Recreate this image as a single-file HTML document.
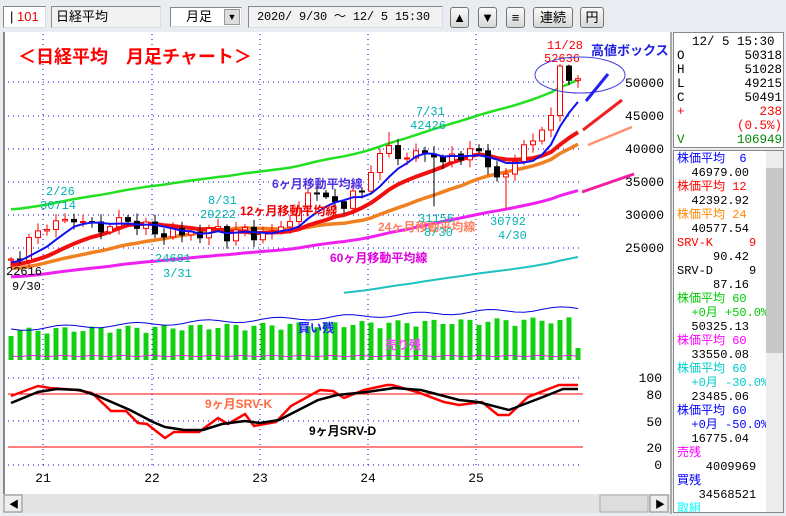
<!DOCTYPE html>
<html><head><meta charset="utf-8">
<style>
*{margin:0;padding:0;box-sizing:border-box}
body{width:786px;height:516px;overflow:hidden;background:#e9edf2;font-family:"Liberation Sans","Noto Sans CJK JP",sans-serif;position:relative}
.box{position:absolute;background:#fff;border:1px solid #888;border-right-color:#ddd;border-bottom-color:#ddd;font-size:13px;line-height:20px}
.btn{position:absolute;top:7px;height:21px;border:1px solid #777;border-radius:3px;background:linear-gradient(#fafafa,#d8d8d8);font-size:13px;text-align:center;line-height:19px}
#info div,#list div{height:14px;line-height:14px;font-family:"Liberation Mono","Noto Sans CJK JP",monospace;font-size:12.5px;white-space:pre}
#list div{font-size:12px}
</style></head><body>
<div class="box" style="left:3px;top:6px;width:43px;height:22px;color:#e00;padding-left:6px"><span style="color:#000">|</span> 101</div>
<div class="box" style="left:51px;top:6px;width:110px;height:22px;padding-left:4px;background:#f2f2f2">日経平均</div>
<div class="box" style="left:170px;top:7px;width:72px;height:20px;padding-left:15px;line-height:18px">月足<span style="position:absolute;right:1px;top:1px;width:16px;height:16px;background:#ddd;border:1px solid #999;font-size:9px;text-align:center;line-height:15px">▼</span></div>
<div class="box" style="left:248px;top:6px;width:195px;height:22px;padding-left:8px;background:#f2f2f2;font-family:'Liberation Mono','Noto Sans CJK JP',monospace;font-size:12px;letter-spacing:-0.2px;white-space:nowrap;overflow:hidden">2020/ 9/30 ～ 12/ 5 15:30</div>
<div class="btn" style="left:450px;width:19px">▲</div>
<div class="btn" style="left:478px;width:19px">▼</div>
<div class="btn" style="left:506px;width:19px">≡</div>
<div class="btn" style="left:533px;width:40px">連続</div>
<div class="btn" style="left:580px;width:24px">円</div>

<svg style="position:absolute;left:0;top:31px" width="786" height="485" viewBox="0 31 786 485">
<rect x="0" y="31" width="786" height="485" fill="#e9edf2"/>
<rect x="3" y="32" width="667" height="462" fill="#fff"/>
<rect x="3" y="32" width="2" height="462" fill="#888"/>
<rect x="3" y="494" width="667" height="19" fill="#e4e4e4"/>
<rect x="4" y="495" width="18" height="17" fill="#eee" stroke="#888"/>
<text x="9" y="508" font-size="10">◀</text>
<rect x="600" y="495" width="48" height="17" fill="#ddd" stroke="#aaa"/>
<rect x="650" y="495" width="18" height="17" fill="#eee" stroke="#888"/>
<text x="655" y="508" font-size="10">▶</text>
<g id="grid" stroke="#0000e0" stroke-width="1" stroke-dasharray="1,4"></g>
<g id="main"></g>
<line x1="8" y1="394" x2="583" y2="394" stroke="#f00"/>
<line x1="8" y1="447" x2="583" y2="447" stroke="#f00"/>
<polyline fill="none" stroke="#f00" stroke-width="2.5" points="11,396 38,386 50,388 77,390 92,393 111,411 126,411 138,423 147,424 165,438 174,432 199,432 218,418 228,424 245,414 254,426 276,422 291,406 320,390 333,391 344,398 364,390 387,385 392,385 417,392 444,402 459,405 482,402 498,415 509,415 528,397 559,385 578,385"/>
<polyline fill="none" stroke="#000" stroke-width="2.5" points="11,403 38,392 57,389 80,390 100,397 130,410 153,422 165,427 184,430 203,430 222,424 245,421 260,423 279,420 318,400 337,395 367,392 394,388 421,390 459,400 478,402 509,410 543,397 563,389 578,389"/>
<g font-weight="bold" font-size="12">
<text x="205" y="408" fill="#ff6a40">9ヶ月SRV-K</text>
<text x="309" y="435" fill="#000">9ヶ月SRV-D</text>
<text x="298" y="332" fill="#2020ff">買い残</text>
<text x="385" y="349" fill="#ff40ff">売り残</text>
<text x="272" y="188" fill="#5030e0">6ヶ月移動平均線</text>
<text x="240" y="215" fill="#f00000">12ヶ月移動平均線</text>
<text x="378" y="231" fill="#ff8060">24ヶ月移動平均線</text>
<text x="330" y="262" fill="#e000e0">60ヶ月移動平均線</text>
<text x="591" y="55" fill="#2020e0" font-size="13">高値ボックス</text>
</g>
<text x="18" y="63" fill="#f00" font-size="18" font-weight="bold">＜日経平均　月足チャート＞</text>
<g font-size="12" fill="#00b0b0" font-family="Liberation Mono,monospace">
<text x="46" y="195">2/26</text><text x="40" y="209">30714</text>
<text x="208" y="204">8/31</text><text x="200" y="218">29222</text>
<text x="155" y="262">24681</text><text x="163" y="277">3/31</text>
<text x="416" y="115">7/31</text><text x="410" y="129">42426</text>
<text x="418" y="222">31156</text><text x="424" y="236">8/30</text>
<text x="490" y="225">30792</text><text x="498" y="239">4/30</text>
</g>
<g font-size="12" fill="#000" font-family="Liberation Mono,monospace">
<text x="6" y="275">22616</text><text x="12" y="290">9/30</text>
</g>
<g font-size="12" fill="#f00" font-family="Liberation Mono,monospace">
<text x="547" y="49">11/28</text><text x="544" y="62">52636</text>
</g>
<ellipse cx="580" cy="75" rx="45" ry="18" fill="none" stroke="#4040e0" stroke-width="1"/>
<line x1="586" y1="101" x2="608" y2="74" stroke="#2020f0" stroke-width="3"/>
<line x1="583" y1="130" x2="622" y2="100" stroke="#f02020" stroke-width="3"/>
<line x1="588" y1="145" x2="632" y2="127" stroke="#ff9070" stroke-width="2.5"/>
<line x1="582" y1="192" x2="634" y2="174" stroke="#f020a0" stroke-width="3"/>
<g font-size="13" fill="#000" font-family="Liberation Mono,monospace" text-anchor="end">
<text x="664" y="87">50000</text><text x="664" y="120">45000</text><text x="664" y="153">40000</text>
<text x="664" y="186">35000</text><text x="664" y="219">30000</text><text x="664" y="252">25000</text>
<text x="662" y="382">100</text><text x="662" y="399">80</text><text x="662" y="426">50</text>
<text x="662" y="452">20</text><text x="662" y="469">0</text>
</g>
<g font-size="13" fill="#000" font-family="Liberation Mono,monospace" text-anchor="middle">
<text x="43" y="482">21</text><text x="152" y="482">22</text><text x="260" y="482">23</text><text x="368" y="482">24</text><text x="476" y="482">25</text>
</g>
<rect x="670" y="32" width="2" height="482" fill="#aaa"/>
</svg>

<div id="info" style="position:absolute;left:673px;top:32px;width:111px;height:116px;background:#fff;border:1px solid #888;padding:2px 2px 0 3px">
<div>  12/ 5 15:30</div>
<div>O        50318</div>
<div>H        51028</div>
<div>L        49215</div>
<div>C        50491</div>
<div style="color:#f00">+          238</div>
<div style="color:#f00">        (0.5%)</div>
<div style="color:#080">V       106949</div>
</div>
<div id="list" style="position:absolute;left:673px;top:150px;width:111px;height:363px;background:#fff;border:1px solid #888;padding:1px 0 0 3px;overflow:hidden">
<div style="position:absolute;right:0;top:0;width:17px;height:361px;background:#ececec"><div style="margin-top:17px;height:185px;background:#c8c8c8"></div></div>
<div style="color:#00f">株価平均  6</div><div>  46979.00</div>
<div style="color:#f00">株価平均 12</div><div>  42392.92</div>
<div style="color:#f80">株価平均 24</div><div>  40577.54</div>
<div style="color:#f00">SRV-K     9</div><div>     90.42</div>
<div>SRV-D     9</div><div>     87.16</div>
<div style="color:#0c0">株価平均 60</div><div style="color:#0c0">  +0月 +50.0%</div><div>  50325.13</div>
<div style="color:#f0f">株価平均 60</div><div>  33550.08</div>
<div style="color:#0cc">株価平均 60</div><div style="color:#0cc">  +0月 -30.0%</div><div>  23485.06</div>
<div style="color:#00f">株価平均 60</div><div style="color:#00f">  +0月 -50.0%</div><div>  16775.04</div>
<div style="color:#f0f">売残</div><div>    4009969</div>
<div style="color:#00f">買残</div><div>   34568521</div>
<div style="color:#0ff">取組</div>
</div>

<script>
var C=[23185,22977,26433,27444,27663,28966,29178,28812,28860,28791,27283,28089,29452,28892,27821,28791,27001,26526,27821,26847,27279,26393,27801,28091,25937,27587,27968,26094,27327,27445,28041,28856,30887,33189,33172,32619,31857,30858,33486,33464,36286,39166,40369,38405,38487,39583,39101,38647,37919,39081,38208,39894,39572,37155,35617,36045,37965,40487,41069,42718,44932,52411,50253,50491];
var pre=[];for(var k=0;k<60;k++)pre.push(18300+k*70+Math.sin(k*0.9)*900);
var all=pre.concat(C);
function Y(p){return 82+(50000-p)*33/5000}
function X(i){return 11+i*9}
function ma(n,i){var s=0;for(var j=0;j<n;j++)s+=all[60+i-j];return s/n}
var ns='http://www.w3.org/2000/svg';
function el(t,a,par){var e=document.createElementNS(ns,t);for(var k in a)e.setAttribute(k,a[k]);par.appendChild(e);return e}
var g=document.getElementById('grid');
[82,116,149,182,215,248].forEach(function(y){el('line',{x1:8,y1:y,x2:583,y2:y},g)});
[378,421,465].forEach(function(y){el('line',{x1:8,y1:y,x2:583,y2:y},g)});
[43,152,260,368,476].forEach(function(x){el('line',{x1:x,y1:34,x2:x,y2:468},g)});
var m=document.getElementById('main');
function line(f,col,w,from){var p=[];for(var i=from||0;i<C.length;i++)p.push(X(i)+','+Y(f(i)).toFixed(1));el('polyline',{points:p.join(' '),fill:'none',stroke:col,'stroke-width':w},m)}
line(function(i){return ma(60,i)*1.5},'#20e020',2.5);
line(function(i){return ma(60,i)*0.7},'#20c0c0',2,37);
line(function(i){return ma(60,i)},'#f020f0',3);
line(function(i){return ma(24,i)},'#f08020',3.5);
line(function(i){return ma(12,i)},'#f01010',4);
for(var i=0;i<C.length;i++){var c=C[i],o=i?C[i-1]:23000;var hi=Math.max(o,c)+300+Math.abs(Math.sin(i*1.7))*900,lo=Math.min(o,c)-300-Math.abs(Math.cos(i*1.3))*900;
if(i==62)hi=52636;if(i==42)hi=42426;if(i==47)lo=31156;if(i==55)lo=30792;
var up=c>=o,x=X(i);el('line',{x1:x,y1:Y(hi),x2:x,y2:Y(lo),stroke:up?'#f00':'#000'},m);
var t=Y(Math.max(o,c)),b=Y(Math.min(o,c));el('rect',{x:x-2.5,y:t,width:5,height:Math.max(1,b-t),fill:up?'#fff':'#000',stroke:up?'#f00':'#000'},m)}
line(function(i){return ma(6,i)},'#1010f0',2);
var bp=[],pp=[];
for(var i=0;i<C.length;i++){var x=X(i),h=24+i*0.18+Math.abs(Math.sin(i*2.3))*8;if(i==63)h=12;if(i==61)h=40;
el('rect',{x:x-2.5,y:360-h,width:5,height:h,fill:'#10d010'},m);
bp.push(x+','+(329-i*0.33+Math.sin(i*0.8)*2).toFixed(1));pp.push(x+','+(356+Math.sin(i*1.9)*0.8).toFixed(1))}
el('polyline',{points:bp.join(' '),fill:'none',stroke:'#0000e0','stroke-width':1},m);
el('polyline',{points:pp.join(' '),fill:'none',stroke:'#e020e0','stroke-width':1},m);
</script>
</body></html>
